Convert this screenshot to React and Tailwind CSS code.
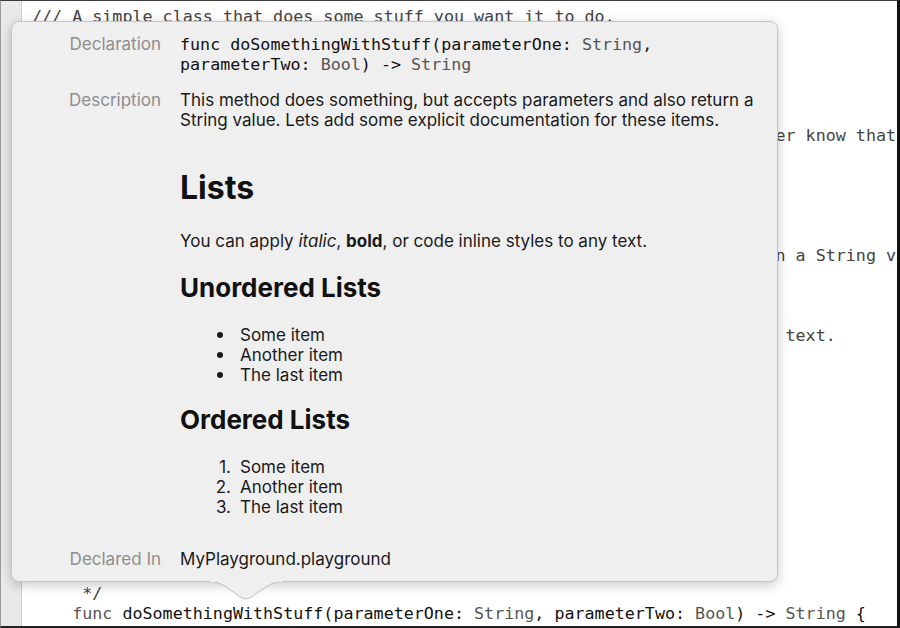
import React from 'react';

const mono = "font-['DejaVu_Sans_Mono',monospace]";
const sans = "font-['Inter','Noto_Sans',sans-serif]";

const lines = [
  '/// A simple class that does some stuff you want it to do.',
  'class MyClass {',
  '',
  '    /**',
  '     This method does something, but accepts parameters and also return a',
  '     String value. Lets add some explicit documentation for these items.',
  '     - parameter parameterOne: A String value that we pass to let the caller know that it matters.',
  '     - parameter parameterTwo: A Bool value to toggle things.',
  '',
  '     # Lists',
  '',
  '     - important: Do not forget about this one.',
  '     - returns: This method does all its work and once done, it will return a String value.',
  '',
  '     ## Inline styles',
  '',
  '     You can also apply *italic*, **bold**, or `code` inline styles to any text.',
  '',
  '     ## Unordered Lists',
  '',
  '     * Some item',
  '     * Another item',
  '     * The last item',
  '',
  '     ## Ordered Lists',
  '',
  '     1. Some item',
  '     2. Another item',
  '     3. The last item',
  '     */',
];

function Row({ label, children, className = '' }) {
  return (
    <div className={`flex ${className}`}>
      <div className={`w-[149px] shrink-0 text-right text-[17px] leading-[19.5px] text-[#8e8e8e] ${sans}`}>{label}</div>
      <div className="ml-[19px] flex-1">{children}</div>
    </div>
  );
}

function Bullet({ children }) {
  return (
    <div className="flex items-center">
      <div className="w-[60px] shrink-0 flex justify-end pr-[17px]">
        <span className="block w-[6px] h-[6px] rounded-full bg-[#1a1a1a]"></span>
      </div>
      <span>{children}</span>
    </div>
  );
}

function Numbered({ n, children }) {
  return (
    <div className="flex">
      <span className="w-[60px] shrink-0 text-right pr-[9px]">{n}.</span>
      <span>{children}</span>
    </div>
  );
}

export default function App() {
  return (
    <div className="relative w-[900px] h-[628px] overflow-hidden bg-white border-t border-t-[#3a3a3a] border-r-[3px] border-r-[#111] border-b-2 border-b-[#222] border-l border-l-[#9a9a9a]">
      {/* editor */}
      <div className="flex h-full">
        <div className="w-[21px] shrink-0 bg-[#e9e9e9] border-r border-r-[#cfcfcf]"></div>
        <pre className={`pl-[10px] pt-[6px] text-[16.7px] leading-[19.9px] text-[#444] whitespace-pre ${mono}`}>
          {lines.map((l, i) => (
            <div key={i}>{l || ' '}</div>
          ))}
          <div className="text-[#111]">
            <span className="text-[#555]">    func</span> doSomethingWithStuff(parameterOne: <span className="text-[#555]">String</span>, parameterTwo: <span className="text-[#555]">Bool</span>) -&gt; <span className="text-[#555]">String</span> {'{'}
          </div>
        </pre>
      </div>

      {/* quick help popover */}
      <div className="absolute left-[10px] top-[20px] w-[767px] h-[561px] flex flex-col rounded-[8px] border border-[#c6c6c6] bg-[#efefef] pt-[13px] pb-[12px] shadow-[0_3px_12px_rgba(0,0,0,0.22)]">
        <Row label="Declaration">
          <div className={`text-[16.7px] leading-[19.5px] text-[#111] ${mono}`}>
            func doSomethingWithStuff(parameterOne: <span className="text-[#555]">String</span>,
            <br />
            parameterTwo: <span className="text-[#555]">Bool</span>) -&gt; <span className="text-[#555]">String</span>
          </div>
        </Row>

        <Row label="Description" className="mt-[17px]">
          <div className={`flex flex-col text-[17px] text-[#1a1a1a] ${sans}`}>
            <p className="leading-[19.5px]">
              This method does something, but accepts parameters and also return a
              <br />
              String value. Lets add some explicit documentation for these items.
            </p>
            <h1 className="mt-[39px] text-[32px] font-bold leading-[38px] text-[#111]">Lists</h1>
            <p className="mt-[24px] leading-[20px]">
              You can apply <em>italic</em>, <strong>bold</strong>, or code inline styles to any text.
            </p>
            <h2 className="mt-[22px] text-[26px] font-bold leading-[30px] text-[#111]">Unordered Lists</h2>
            <div className="mt-[22px] -ml-[60px] pl-[60px] leading-[20px]">
              <Bullet>Some item</Bullet>
              <Bullet>Another item</Bullet>
              <Bullet>The last item</Bullet>
            </div>
            <h2 className="mt-[20px] text-[26px] font-bold leading-[30px] text-[#111]">Ordered Lists</h2>
            <div className="mt-[22px] -ml-[60px] pl-[60px] leading-[20px]">
              <Numbered n={1}>Some item</Numbered>
              <Numbered n={2}>Another item</Numbered>
              <Numbered n={3}>The last item</Numbered>
            </div>
          </div>
        </Row>

        <Row label="Declared In" className="mt-auto">
          <div className={`text-[17px] leading-[19.5px] text-[#1a1a1a] ${sans}`}>MyPlayground.playground</div>
        </Row>
      </div>

      {/* popover arrow */}
      <svg className="absolute left-[209px] top-[579px]" width="72" height="22" viewBox="0 0 72 22">
        <path d="M0 1 C 16 1, 28 19, 36 19 C 44 19, 56 1, 72 1 Z" fill="#efefef" />
        <path d="M0 1.5 C 16 1.5, 28 19, 36 19 C 44 19, 56 1.5, 72 1.5" fill="none" stroke="#bdbdbd" strokeWidth="1" />
        <rect x="0" y="0" width="72" height="2" fill="#efefef" />
      </svg>
    </div>
  );
}
